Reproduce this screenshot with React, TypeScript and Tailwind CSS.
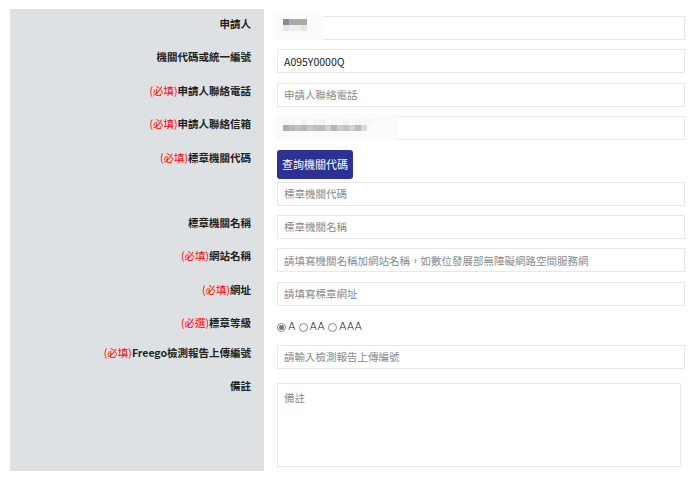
import React from "react"

const font = { fontFamily: '"Noto Sans CJK TC", "Noto Sans", sans-serif' }

function Req({ kind = "必填" }: { kind?: string }) {
  return <span className="font-normal text-[#f00]">({kind})</span>
}

function Row({ label, children, tall }: { label: React.ReactNode; children: React.ReactNode; tall?: boolean }) {
  return (
    <div className="flex">
      <div className="w-[254px] shrink-0 bg-[#dde1e4] pr-[13px] pt-[7px] text-right text-[10.5px] font-bold leading-[16px] text-[#222]">
        {label}
      </div>
      <div className={`flex-1 pl-[13px] pt-[7px] ${tall ? "pb-[4px]" : "pb-[2.4px]"}`}>{children}</div>
    </div>
  )
}

function Field({ value, placeholder }: { value?: string; placeholder?: string }) {
  return (
    <input
      readOnly
      value={value}
      placeholder={placeholder}
      className="block h-[24px] w-[408px] border border-[#e8e8e8] bg-white px-[6px] text-[10.5px] text-[#222] outline-none placeholder:text-[#8a8a8a]"
    />
  )
}

// pixelated blur over personal data
function Mosaic({ top, bottom, w }: { top: string[]; bottom: string[]; w: number }) {
  return (
    <div className="pointer-events-none absolute left-[-2px] top-[-2px] bg-[#fbfbfa] pl-[8px] pt-[5px]" style={{ width: w, height: 26 }}>
      <div className="flex">
        {top.map((c, i) => (
          <div key={i} className="h-[6px] w-[6px]" style={{ background: c }} />
        ))}
      </div>
      <div className="flex">
        {bottom.map((c, i) => (
          <div key={i} className="h-[6px] w-[6px]" style={{ background: c }} />
        ))}
      </div>
    </div>
  )
}

function Radio({ checked, label }: { checked?: boolean; label: string }) {
  return (
    <span className="inline-flex items-center">
      <span className="flex h-[9px] w-[9px] items-center justify-center rounded-full border border-[#888] bg-white">
        {checked && <span className="h-[5px] w-[5px] rounded-full bg-[#777]" />}
      </span>
      <span className="ml-[2px] text-[11px] font-light text-[#111]" style={{ fontFamily: '"DejaVu Sans", sans-serif' }}>
        {label}
      </span>
    </span>
  )
}

export default function App() {
  return (
    <div className="min-h-[477px] bg-white pl-[10px] pt-[9px]" style={font}>
      <div className="w-[675px]">
        <Row label="申請人">
          <div className="relative">
            <Field value="" />
            <Mosaic
              w={48}
              top={["#8d8891", "#a2adb8", "#aaa9a9", "#a6a8aa", "#fbfbfa"]}
              bottom={["#e8e7ea", "#eceef0", "#efeeec", "#e6e6e6", "#fbfbfa"]}
            />
          </div>
        </Row>
        <Row label="機關代碼或統一編號">
          <Field value="A095Y0000Q" />
        </Row>
        <Row label={<><Req />申請人聯絡電話</>}>
          <Field placeholder="申請人聯絡電話" />
        </Row>
        <Row label={<><Req />申請人聯絡信箱</>}>
          <div className="relative">
            <Field value="" />
            <Mosaic
              w={123}
              top={["#f6f6f6", "#f8f8f8", "#fdfdfd", "#f4f4f4", "#fbfbfb", "#f5f5f5", "#f3f3f5", "#fdfdfd", "#f8f8f8", "#fbfbfb", "#f4f4f4", "#fbfbfb", "#f5f5f5", "#f9f9f9", "#f6f6f6", "#fafafa", "#fbfbfa", "#fbfbfa"]}
              bottom={["#aeadb1", "#b8bbbf", "#c4c0bf", "#bdb7b4", "#c6c9cc", "#bcbfc4", "#b9bbbd", "#cfd0d0", "#b9b4b4", "#cccccc", "#c4c4c6", "#d0d2d4", "#c0bbb9", "#dadada", "#fbfbfa", "#fbfbfa", "#fbfbfa", "#fbfbfa"]}
            />
          </div>
        </Row>
        <Row label={<><Req />標章機關代碼</>}>
          <button className="flex h-[29px] w-[76px] items-center justify-center rounded-[3px] bg-[#2d3191] text-[11px] text-white">
            查詢機關代碼
          </button>
          <div className="mt-[3px]">
            <Field placeholder="標章機關代碼" />
          </div>
        </Row>
        <Row label="標章機關名稱">
          <Field placeholder="標章機關名稱" />
        </Row>
        <Row label={<><Req />網站名稱</>}>
          <Field placeholder="請填寫機關名稱加網站名稱，如數位發展部無障礙網路空間服務網" />
        </Row>
        <Row label={<><Req />網址</>}>
          <Field placeholder="請填寫標章網址" />
        </Row>
        <Row label={<><Req kind="必選" />標章等級</>}>
          <div className="flex h-[20px] items-center gap-[3px] pt-[4px]">
            <Radio checked label="A" />
            <Radio label="AA" />
            <Radio label="AAA" />
          </div>
        </Row>
        <Row label={<><Req />Freego檢測報告上傳編號</>}>
          <Field placeholder="請輸入檢測報告上傳編號" />
        </Row>
        <Row label="備註" tall>
          <textarea
            readOnly
            placeholder="備註"
            className="mt-[5px] block h-[84px] w-[404px] resize-none border border-[#e8e8e8] bg-white px-[6px] pt-[6px] text-[10.5px] outline-none placeholder:text-[#8a8a8a]"
          />
        </Row>
      </div>
    </div>
  )
}
